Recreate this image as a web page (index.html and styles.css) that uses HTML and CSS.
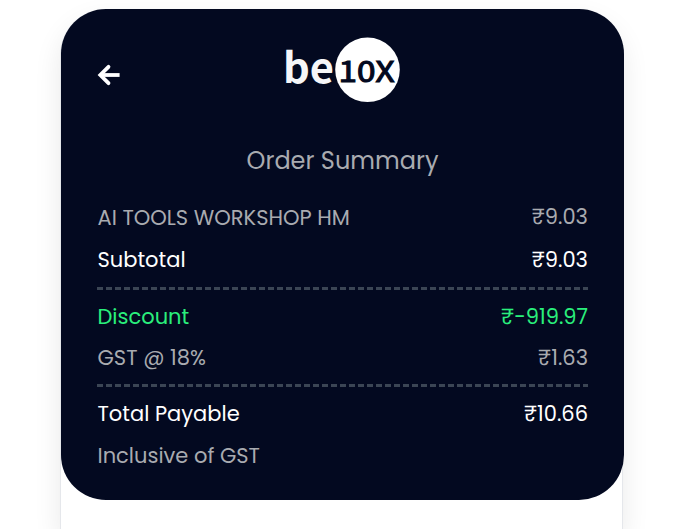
FILE: index.html
```html
<!DOCTYPE html>
<html lang="en">

<head>
  <meta charset="UTF-8">
  <meta name="viewport" content="width=device-width, initial-scale=1.0">
  <title>Order Summary</title>
  <link rel="stylesheet" href="styles.css">
</head>

<body>
  <div class="checkout">
    <div class="summary">
      <div class="header">
        <svg class="back" viewBox="0 0 24 24" width="24" height="24">
          <path d="M11.5 3.8 L3.3 12 L11.5 20.2" stroke-linecap="round" />
          <path d="M4 12 H22.6" />
        </svg>
        <svg class="logo" viewBox="0 0 120 68" width="120" height="68">
          <circle cx="84.5" cy="33.8" r="32.3" />
          <text class="logo-be" x="0" y="47" textLength="51" lengthAdjust="spacingAndGlyphs">be</text>
          <text class="logo-10x" x="55.5" y="45.8" textLength="56" lengthAdjust="spacingAndGlyphs">10X</text>
        </svg>
      </div>
      <h1>Order Summary</h1>
      <div class="row product"><span class="label">AI TOOLS WORKSHOP HM</span><span>₹9.03</span></div>
      <div class="row strong subtotal"><span class="label">Subtotal</span><span>₹9.03</span></div>
      <div class="divider"></div>
      <div class="row discount"><span class="label">Discount</span><span>₹-919.97</span></div>
      <div class="row gst"><span class="label">GST @ 18%</span><span>₹1.63</span></div>
      <div class="divider"></div>
      <div class="row strong"><span class="label">Total Payable</span><span>₹10.66</span></div>
      <div class="row note"><span class="label">Inclusive of GST</span></div>
    </div>
  </div>
</body>

</html>
```
FILE: styles.css
```css
html,
body {
  height: 529px;
  overflow: hidden;
}

body {
  margin: 0;
  background-color: #fff;
  font-family: Poppins, Inter, sans-serif;
}

.checkout {
  box-sizing: border-box;
  width: 563px;
  height: 520px;
  margin: 9px 0 0 60px;
  border: 1px solid #e5e7eb;
  border-width: 0 1px;
  border-radius: 46px 46px 0 0;
  box-shadow: 0 12px 28px rgba(0, 0, 0, 0.09);
}

.summary {
  box-sizing: border-box;
  width: 563px;
  height: 491px;
  padding: 26px 36px 0;
  border-radius: 45px;
  background-color: #030920;
  color: #a9abb0;
  font-size: 21px;
}

.header {
  display: flex;
  align-items: center;
  height: 69px;
}

.back {
  margin-top: 11px;
  fill: none;
  stroke: #fff;
  stroke-width: 3.8;
}

.logo {
  margin-left: 162px;
  fill: #f6f6f8;
}

.logo circle {
  fill: #fff;
}

.logo-be {
  font: bold 41px "Noto Sans CJK JP", sans-serif;
}

.logo-10x {
  fill: #030920;
  stroke: #030920;
  stroke-width: 1.1;
  font: 29px "Noto Sans CJK JP", sans-serif;
}

h1 {
  margin: 33px 0 15px;
  font-size: 24px;
  font-weight: 400;
  line-height: 48px;
  text-align: center;
}

.row {
  display: flex;
  justify-content: space-between;
  height: 34px;
  line-height: 34px;
  white-space: nowrap;
}

.label {
  padding-left: 0.5px;
}

.product .label {
  padding-top: 1px;
}

.strong {
  color: #fff;
}

.subtotal {
  margin-top: 9px;
}

.gst {
  margin-top: 7px;
}

.note {
  margin-top: 8px;
}

.discount {
  color: #2aef7c;
}

.divider {
  height: 3px;
  margin: 10px 0;
  background: repeating-linear-gradient(to right, #3b4554 0 6px, transparent 6px 9px);
}

.gst + .divider {
  margin-top: 9px;
}
```
